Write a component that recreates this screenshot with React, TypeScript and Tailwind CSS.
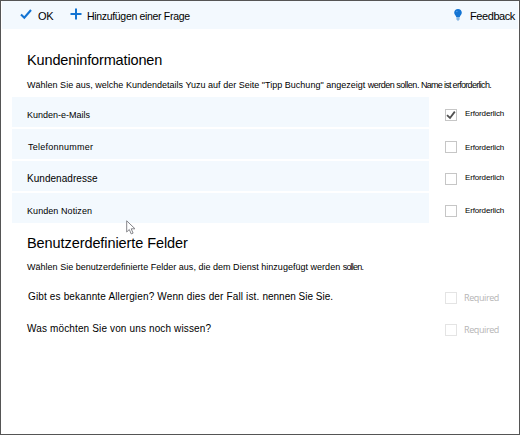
import React from "react";

type FieldProps = {
  label: string;
  labelClass: string;
  requiredClass: string;
  checked?: boolean;
};

function CheckBox({ checked, faint }: { checked?: boolean; faint?: boolean }) {
  return (
    <span
      className={
        faint
          ? "flex h-[12px] w-[12px] shrink-0 items-center justify-center border border-[#e4e4e4] bg-white"
          : "flex h-[12px] w-[12px] shrink-0 items-center justify-center border border-[#c6c6c6] bg-white"
      }
    >
      {checked && (
        <svg viewBox="0 0 10 10" className="h-[10px] w-[10px] shrink-0" fill="none" stroke="#505050" strokeWidth="1.8">
          <path d="M1 5.2 4 8 8.8 1.6" />
        </svg>
      )}
    </span>
  );
}

function FieldRow({ label, labelClass, requiredClass, checked }: FieldProps) {
  return (
    <div className="flex h-[30px]">
      <div className="w-[417px] bg-[#f3f9fe] pl-[15px] pt-[9px] leading-[14px]">
        <span className={labelClass}>{label}</span>
      </div>
      <div className="flex pl-[16px] pt-[12px]">
        <CheckBox checked={checked} />
        <span className={requiredClass}>Erforderlich</span>
      </div>
    </div>
  );
}

function CustomRow({ label, ending, labelClass }: { label: string; ending?: string; labelClass: string }) {
  return (
    <div className="flex h-[32px]">
      <div className="w-[417px] pl-[15px] pt-px text-[10px] leading-[14px]">
        <span className={labelClass}>{label}</span>
        {ending && <span>{ending}</span>}
      </div>
      <div className="flex pl-[16px] pt-[3px]">
        <CheckBox faint />
        <span className="ml-[7px] font-['Open_Sans',sans-serif] text-[9px] leading-[12px] tracking-[-0.4px] text-[#b5b5b5]">Required</span>
      </div>
    </div>
  );
}

export default function App() {
  return (
    <div className="relative h-[435px] w-[520px] overflow-hidden whitespace-nowrap border border-[#555555] bg-white font-['Liberation_Sans',Arial,sans-serif] text-black">
      <header className="mx-px flex h-[28px] bg-[#f3f9fe]">
        <svg viewBox="0 0 12 11" className="ml-[18px] mt-[8px] h-[11px] w-[12px] shrink-0" fill="none" stroke="#1374d3" strokeWidth="2.1">
          <path d="M1 5.6 4.3 8.8 11 1" />
        </svg>
        <span className="ml-[6px] mt-[7px] w-[32px] text-[11px] leading-[16px] tracking-[-0.3px]">OK</span>
        <svg viewBox="0 0 12 12" className="mt-[7px] h-[12px] w-[12px] shrink-0" stroke="#1374d3" strokeWidth="2">
          <path d="M6 0.5V11.5M0.5 6H11.5" />
        </svg>
        <span className="ml-[5px] mt-[7px] w-[367px] text-[10.5px] leading-[16px] tracking-[-0.32px]">Hinzufügen einer Frage</span>
        <svg viewBox="0 0 8 12" className="mt-[8px] h-[12px] w-[8px] shrink-0">
          <path d="M4 0C1.8 0 .2 1.5.2 3.7.2 5.5 2 6.3 2.2 8h3.6C6 6.3 7.8 5.5 7.8 3.7 7.8 1.5 6.2 0 4 0Z" fill="#1374d3" />
          <path d="M2.4 8h3.2v2.4L4 12 2.4 10.4Z" fill="#85b5e2" />
          <circle cx="2.8" cy="2.5" r="0.8" fill="#4e9ce6" />
        </svg>
        <span className="ml-[8px] mt-[7px] text-[11px] leading-[16px] tracking-[-0.42px]">Feedback</span>
      </header>

      <main className="pl-[11px]">
        <h1 className="ml-[15px] mt-[21px] h-[20px] text-[14.5px] leading-[20px] tracking-[-0.14px]">Kundeninformationen</h1>
        <p className="ml-[15px] mt-[9px] h-[12px] text-[9px] leading-[12px]">
          <span className="tracking-[0.015px]">Wählen Sie aus, welche Kundendetails Yuzu auf der Seite "Tipp Buchung" angezeigt </span>
          <span className="tracking-[-0.5px]">werden sollen. </span>
          <span className="tracking-[-0.7px]">Name ist erforderlich.</span>
        </p>

        <section className="mt-[6px] flex flex-col gap-[2px]">
          <FieldRow label="Kunden-e-Mails" checked labelClass="text-[9px] tracking-[0px]" requiredClass="ml-[8px] -mt-[2px] text-[8px] leading-[14px] tracking-[-0.15px]" />
          <FieldRow label="Telefonnummer" labelClass="ml-px text-[9px] tracking-[0.25px]" requiredClass="ml-[8px] text-[8px] leading-[14px] tracking-[-0.15px]" />
          <FieldRow label="Kundenadresse" labelClass="text-[10px] tracking-[0.04px]" requiredClass="ml-[8px] -mt-[2px] text-[8px] leading-[14px] tracking-[-0.15px]" />
          <FieldRow label="Kunden Notizen" labelClass="text-[9px] tracking-[0.07px]" requiredClass="ml-[8px] -mt-px text-[8px] leading-[14px] tracking-[-0.15px]" />
        </section>

        <h2 className="ml-[15px] mt-[10px] h-[20px] text-[14.5px] leading-[20px] tracking-[-0.08px]">Benutzerdefinierte Felder</h2>
        <p className="ml-[15px] mt-[8px] h-[12px] text-[9px] leading-[12px]">
          <span className="tracking-[0.02px]">Wählen Sie benutzerdefinierte Felder aus, die dem Dienst hinzugefügt werden </span>
          <span className="tracking-[-0.8px]">sollen.</span>
        </p>

        <section className="mt-[16px]">
          <CustomRow label="Gibt es bekannte Allergien? Wenn dies der Fall ist. " ending="nennen Sie Sie." labelClass="ml-px tracking-[0.15px]" />
          <CustomRow label="Was möchten Sie von uns noch wissen?" labelClass="tracking-[0.14px]" />
        </section>
      </main>

      <svg viewBox="0 0 11 16" className="absolute left-[125px] top-[219px] h-[16px] w-[11px]" fill="#ffffff" stroke="#85858a" strokeWidth="1">
        <path d="M.7.8V12l2.6-2.5 1.9 4.4 1.9-.8-1.9-4.3H9Z" />
      </svg>
    </div>
  );
}
